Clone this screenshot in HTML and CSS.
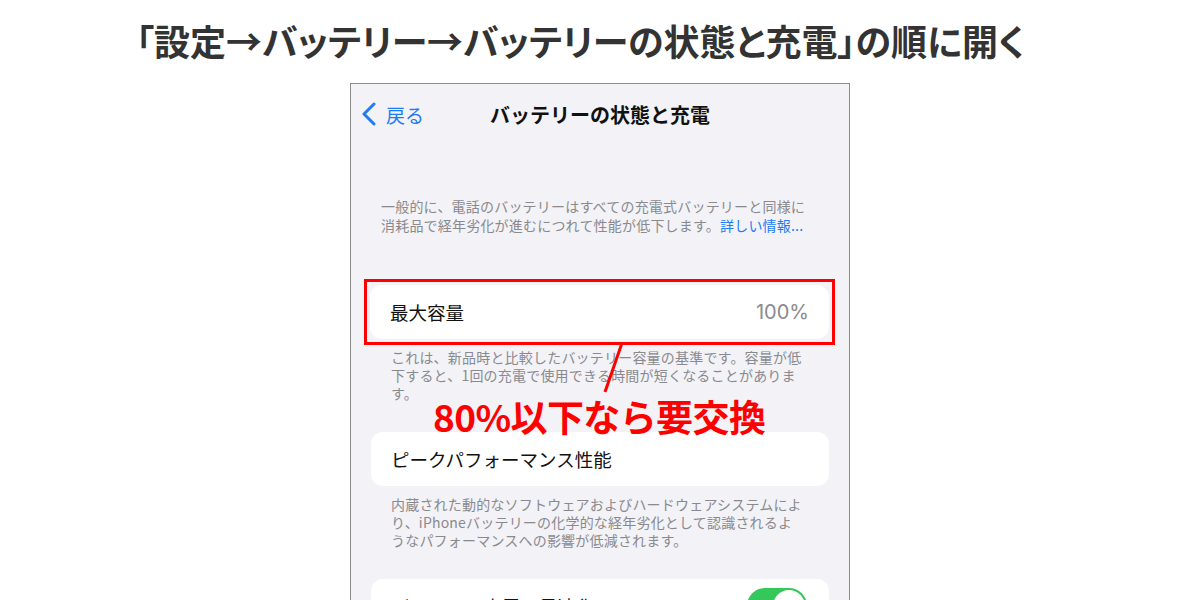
FILE: index.html
```html
<!DOCTYPE html>
<html lang="ja">
<head>
    <meta charset="UTF-8">
    <meta name="viewport" content="width=device-width, initial-scale=1.0">
    <title>バッテリーの状態と充電</title>
    <link rel="stylesheet" href="styles.css">
</head>
<body>
    <h1 class="headline">「設定→バッテリー→バッテリーの状態と充電」の順に開く</h1>

    <div class="stage">
        <div class="phone">
            <div class="nav">
                <a class="back" href="#">
                    <svg width="16" height="24" viewBox="0 0 16 24">
                        <polyline points="13,2 3,12 13,22" fill="none" stroke="#1f7cf3" stroke-width="3" stroke-linecap="round" stroke-linejoin="round"/>
                    </svg>
                    <span>戻る</span>
                </a>
                <div class="nav-title">バッテリーの状態と充電</div>
                <div></div>
            </div>

            <p class="intro">一般的に、電話のバッテリーはすべての充電式バッテリーと同様に<br>消耗品で経年劣化が進むにつれて性能が低下します。<span class="link">詳しい情報...</span></p>

            <div class="highlight">
                <div class="card">
                    <span class="label">最大容量</span>
                    <span class="value">100%</span>
                </div>
            </div>
            <p class="note">これは、新品時と比較したバッテリー容量の基準です。容量が低<br>下すると、1回の充電で使用できる時間が短くなることがありま<br>す。</p>

            <div class="card">
                <span class="label">ピークパフォーマンス性能</span>
            </div>
            <p class="note">内蔵された動的なソフトウェアおよびハードウェアシステムによ<br>り、iPhoneバッテリーの化学的な経年劣化として認識されるよ<br>うなパフォーマンスへの影響が低減されます。</p>

            <div class="card">
                <span class="label">バッテリー充電の最適化</span>
                <span class="toggle"><span class="knob"></span></span>
            </div>

            <!-- 注釈 -->
            <svg class="pointer" width="40" height="60" viewBox="0 0 40 60">
                <line x1="29" y1="1" x2="12" y2="50" stroke="#ff0000" stroke-width="3"/>
            </svg>
            <div class="callout">80%以下なら要交換</div>
        </div>
    </div>
</body>
</html>
```

FILE: styles.css
```css
html, body {
    height: 600px;
    overflow: hidden;
}
body {
    margin: 0;
    padding: 0;
    background: #fff;
    font-family: Inter, "Noto Sans CJK JP", sans-serif;
}
.headline {
    margin: 0;
    height: 83px;
    box-sizing: border-box;
    padding: 0 0 4px 136px;
    display: flex;
    align-items: center;
    font-family: "Noto Sans CJK JP", sans-serif;
    font-size: 36px;
    font-weight: 700;
    color: #333;
    font-feature-settings: "palt";
    white-space: nowrap;
}
.stage {
    display: flex;
    justify-content: center;
}
.phone {
    position: relative;
    width: 500px;
    height: 520px;
    box-sizing: border-box;
    border: 1px solid #8c8c8c;
    border-bottom: none;
    background: #f2f2f7;
}
.nav {
    height: 60px;
    display: grid;
    grid-template-columns: 1fr auto 1fr;
    align-items: center;
}
.back {
    display: flex;
    align-items: center;
    gap: 9px;
    padding-left: 10px;
    color: #1f7cf3;
    text-decoration: none;
    font-family: "Noto Sans CJK JP", sans-serif;
    font-size: 19px;
}
.nav-title {
    font-family: "Noto Sans CJK JP", sans-serif;
    font-size: 20px;
    font-weight: 700;
    color: #111;
}
.intro {
    margin: 53px 0 0;
    padding-left: 30px;
    font-family: "Noto Sans CJK JP", sans-serif;
    font-size: 14px;
    line-height: 18.5px;
    letter-spacing: 0.2px;
    color: #8a8a8e;
    white-space: nowrap;
}
.link {
    color: #1f7cf3;
}
.highlight {
    margin: 45px 14px -6px 13px;
    border: 3px solid #ff0000;
    padding: 3px;
}
.highlight .card {
    margin: 0;
}
.card {
    margin: 0 20px;
    height: 54px;
    box-sizing: border-box;
    padding: 0 20px;
    display: flex;
    align-items: center;
    justify-content: space-between;
    background: #fff;
    border-radius: 12px;
}
.label {
    font-family: "Noto Sans CJK JP", sans-serif;
    font-size: 18.5px;
    color: #111;
}
.value {
    font-size: 20px;
    color: #8a8a8e;
}
.note {
    margin: 9px 0 30px;
    padding-left: 40px;
    font-family: "Noto Sans CJK JP", sans-serif;
    font-size: 14px;
    line-height: 18px;
    letter-spacing: 0.2px;
    color: #8a8a8e;
    white-space: nowrap;
}
.toggle {
    position: relative;
    width: 60px;
    height: 36px;
    margin-right: 2px;
    border-radius: 18px;
    background: #34c759;
}
.knob {
    position: absolute;
    top: 2px;
    right: 2px;
    width: 32px;
    height: 32px;
    border-radius: 50%;
    background: #fff;
}
.pointer {
    position: absolute;
    left: 242px;
    top: 258px;
}
.callout {
    position: absolute;
    left: 82px;
    top: 314px;
    font-family: "Noto Sans CJK JP", sans-serif;
    font-size: 37px;
    font-weight: 700;
    line-height: 1;
    letter-spacing: -0.6px;
    color: #ff0000;
    white-space: nowrap;
}
```
